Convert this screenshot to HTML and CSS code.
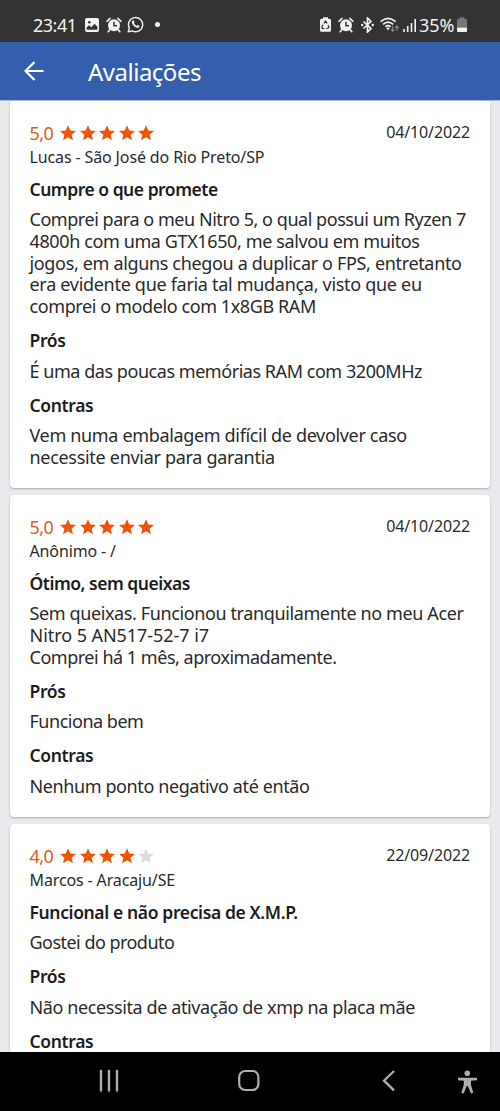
FILE: index.html
```html
<!DOCTYPE html>
<html lang="pt-BR">
<head>
<meta charset="utf-8">
<title>Avaliações</title>
<link rel="stylesheet" href="styles.css">
</head>
<body>
<svg class="defs" width="0" height="0">
  <symbol id="star" viewBox="2 2 20 19"><path d="M12 17.270L18.180 21l-1.640-7.030L22 9.240l-7.190-.61L12 2 9.190 8.630 2 9.240l5.460 4.730L5.820 21z"/></symbol>
  <symbol id="alarm" viewBox="0 0 16 16"><circle cx="8" cy="8.300" r="6" fill="#f2f2f2"/><path d="M1.200 4.200L4 1.500M14.800 4.200L12 1.500M3.800 12.800l-1.600 1.900M12.200 12.800l1.600 1.900" stroke="#f2f2f2" stroke-width="1.700" stroke-linecap="round"/><path d="M8 4.800v4h3" fill="none" stroke="#333" stroke-width="1.500"/></symbol>
</svg>
<div class="screen">
  <header class="status">
    <div class="status-left">
      <span class="clock">23:41</span>
      <svg class="i-photo" viewBox="0 0 14 14"><rect width="14" height="14" rx="2" fill="#f2f2f2"/><circle cx="4.300" cy="4.200" r="1.300" fill="#333"/><path d="M1.600 11.800V9.500l2.500-2.300 2.300 2 3.200-3.500 2.800 3v3.100z" fill="#333"/></svg>
      <svg class="i-alarm"><use href="#alarm"/></svg>
      <svg class="i-whats" viewBox="0 0 17 17"><path d="M1.200 15.900l1.100-4A7.100 7.100 0 1 1 5.100 14.800z" fill="none" stroke="#f2f2f2" stroke-width="1.400" stroke-linejoin="round"/><path d="M5.700 4.600c.5-.4 1-.2 1.200.2l.6 1.400c.1.4-.7 1-.5 1.300.6 1 1.400 1.700 2.500 2.200.4.2.9-.9 1.300-.7l1.500.8c.5.4-.1 1.600-.8 1.900-1 .4-2.400 0-4-1.200-1.400-1.100-2.600-2.800-2.700-4 0-.8.4-1.500.9-1.900z" fill="#f2f2f2"/></svg>
      <i class="dot"></i>
    </div>
    <div class="status-right">
      <svg class="i-saver" viewBox="0 0 11 15"><path d="M3 1.800V.3h5v1.500h1.500Q11 1.800 11 3.300v10Q11 14.800 9.500 14.800h-8Q0 14.800 0 13.300v-10Q0 1.800 1.500 1.800z" fill="#f2f2f2"/><path d="M3.900 6.300l1.600-2.200 1.600 2.200M8 8l1 2.500-1.800 1H6.300M4.500 11.500H2.400l-.6-1.500L3 7.800" fill="none" stroke="#333" stroke-width="1.200"/></svg>
      <svg class="i-alarm"><use href="#alarm"/></svg>
      <svg class="i-bt" viewBox="0 0 13 16"><path d="M2.500 4.500l7.500 7L6.500 15V1L10 4.500l-7.500 7" fill="none" stroke="#f2f2f2" stroke-width="1.700"/><circle cx="1.200" cy="8" r="1.200" fill="#f2f2f2"/><circle cx="11.800" cy="8" r="1.200" fill="#f2f2f2"/></svg>
      <svg class="i-wifi" viewBox="0 0 19 15"><path d="M.7 4.600Q8 -2 15.600 4.600M3.100 7.400Q8 2.700 13.200 7.400M5.500 9.900Q8 7.500 10.600 9.900" fill="none" stroke="#f2f2f2" stroke-width="1.700"/><path d="M8 13.200l-1.700-1.900q1.700-1.500 3.400 0z" fill="#f2f2f2"/><path d="M12.700 9v5M11 12.400l1.700 1.900 1.700-1.900M17 14V9.200M15.300 11L17 9l1.700 2" fill="none" stroke="#858585" stroke-width="1.200"/></svg>
      <svg class="i-signal" viewBox="0 0 14 14"><path d="M1 11v3M4.700 8v6M8.500 5v9M12.200 1v13" stroke="#f2f2f2" stroke-width="1.600"/></svg>
      <span class="percent">35%</span>
      <svg class="i-battery" viewBox="0 0 10 15"><path d="M2.500 2V.3h5V2H9q1 0 1 1v7.500H0V3q0-1 1-1z" fill="#777"/><path d="M0 10.500h10V14q0 1-1 1H1q-1 0-1-1z" fill="#f2f2f2"/></svg>
    </div>
  </header>
  <div class="appbar">
    <svg class="back" viewBox="0 0 20 20"><path d="M19.500 10H1.500M10.500 1l-9 9 9 9" fill="none" stroke="#fff" stroke-width="2.200"/></svg>
    <h1>Avaliações</h1>
  </div>
  <main class="reviews">
    <article class="card">
      <div class="top"><span class="score">5,0</span><span class="stars"><svg><use href="#star"/></svg><svg><use href="#star"/></svg><svg><use href="#star"/></svg><svg><use href="#star"/></svg><svg><use href="#star"/></svg></span><time>04/10/2022</time></div>
      <div class="author">Lucas - São José do Rio Preto/SP</div>
      <h2 class="tight">Cumpre o que promete</h2>
      <p><span class="t45">Comprei para o meu Nitro 5, o qual possui um Ryzen 7</span><br><span class="t38">4800h com uma GTX1650, me salvou em muitos</span><br><span class="t35">jogos, em alguns chegou a duplicar o FPS, entretanto</span><br><span class="t30">era evidente que faria tal mudança, visto que eu</span><br><span class="t40">comprei o modelo com 1x8GB RAM</span></p>
      <h2>Prós</h2>
      <p class="t45">É uma das poucas memórias RAM com 3200MHz</p>
      <h2>Contras</h2>
      <p class="t30"><span class="t35">Vem numa embalagem difícil de devolver caso</span><br>necessite enviar para garantia</p>
    </article>
    <article class="card">
      <div class="top"><span class="score">5,0</span><span class="stars"><svg><use href="#star"/></svg><svg><use href="#star"/></svg><svg><use href="#star"/></svg><svg><use href="#star"/></svg><svg><use href="#star"/></svg></span><time>04/10/2022</time></div>
      <div class="author">Anônimo - /</div>
      <h2 class="tight">Ótimo, sem queixas</h2>
      <p><span class="t38">Sem queixas. Funcionou tranquilamente no meu Acer</span><br><span class="t5">Nitro 5 AN517-52-7 i7</span><br><span class="t48">Comprei há 1 mês, aproximadamente.</span></p>
      <h2>Prós</h2>
      <p class="t48">Funciona bem</p>
      <h2>Contras</h2>
      <p class="t40">Nenhum ponto negativo até então</p>
    </article>
    <article class="card">
      <div class="top"><span class="score">4,0</span><span class="stars"><svg><use href="#star"/></svg><svg><use href="#star"/></svg><svg><use href="#star"/></svg><svg><use href="#star"/></svg><svg class="off"><use href="#star"/></svg></span><time>22/09/2022</time></div>
      <div class="author">Marcos - Aracaju/SE</div>
      <h2>Funcional e não precisa de X.M.P.</h2>
      <p class="t53">Gostei do produto</p>
      <h2>Prós</h2>
      <p class="t40">Não necessita de ativação de xmp na placa mãe</p>
      <h2>Contras</h2>
    </article>
  </main>
  <nav class="navbar">
    <svg viewBox="0 0 500 59"><g fill="none" stroke="#aeaeae"><path d="M101 19v19.500M109 19v19.500M117 19v19.500" stroke-width="2.400" stroke-linecap="round"/><rect x="239.200" y="19" width="19.200" height="19" rx="6" stroke-width="2.200"/><path d="M394 19l-10 9.700 10 9.700" stroke-width="2.300"/></g><g fill="#aeaeae"><circle cx="467.300" cy="21.300" r="2.800"/><path d="M458 25.800h19v2.400l-6 .6v4l2.300 8-2.400.8-3-7.500h-1.200l-3 7.500-2.400-.8 2.500-8v-4l-5.800-.6z"/></g></svg>
  </nav>
</div>
</body>
</html>
```
FILE: styles.css
```css
* { box-sizing: border-box; }
body { margin: 0; font-family: "Noto Sans", sans-serif; color: #2a2a2a; background: #000; }
svg { display: block; flex: none; }
.defs { position: absolute; }
.screen { width: 500px; height: 1111px; display: flex; flex-direction: column; overflow: hidden; }
.status { flex: none; height: 42px; padding: 7px 33px 0; background: #333; color: #f2f2f2; display: flex; justify-content: space-between; align-items: center; }
.status-left, .status-right { display: flex; align-items: center; }
.clock { width: 52px; font-size: 18px; line-height: 24px; letter-spacing: -0.500px; }
.i-photo { width: 14px; height: 14px; }
.i-alarm { width: 16px; height: 16px; margin-left: 7px; }
.i-whats { width: 17px; height: 17px; margin-left: 5px; }
.dot { width: 5px; height: 5px; border-radius: 50%; background: #f2f2f2; margin-left: 11px; }
.i-saver { width: 11px; height: 15px; }
.i-bt { width: 13px; height: 16px; margin-left: 7px; }
.i-wifi { width: 19px; height: 15px; margin-left: 6px; }
.i-signal { width: 14px; height: 14px; margin-left: 4px; }
.percent { width: 38px; margin-left: 2px; font-size: 18px; line-height: 24px; letter-spacing: -0.100px; }
.i-battery { width: 10px; height: 15px; }
.appbar { flex: none; height: 59px; background: #355eae; border-bottom: 1px solid #a9bbdd; display: flex; align-items: center; padding-left: 24px; color: #fff; }
.back { width: 20px; height: 20px; }
h1 { margin: 0 0 0 44px; font-size: 24px; font-weight: 400; line-height: 34px; padding-top: 1px; letter-spacing: -0.500px; }
.reviews { flex: none; height: 951px; background: #e9eaee; padding: 0 10px; overflow: hidden; display: flex; flex-direction: column; gap: 7.200px; }
.card { flex: none; background: #fff; border-radius: 4px; box-shadow: 0 1px 2px rgba(0,0,0,.27); padding: 20px 20px 19.500px 19.500px; }
.top { display: flex; align-items: center; height: 24px; }
.score { width: 30.500px; color: #df5a1b; font-size: 18px; letter-spacing: -0.500px; }
.stars { display: flex; gap: 3.500px; fill: #f05206; }
.stars svg { width: 16px; height: 15.500px; }
.stars .off { fill: #dcdcdc; }
time { margin-left: auto; padding-bottom: 2px; font-size: 16px; letter-spacing: -0.130px; }
.author { height: 22px; margin-top: 1px; font-size: 16px; line-height: 22px; letter-spacing: -0.130px; }
h2 { margin: 11.300px 0 9.400px; color: #1c1c1c; font-size: 17.500px; font-weight: 600; line-height: 22px; letter-spacing: -0.370px; }
.author + h2 { margin-top: 9.700px; }
h2.tight { letter-spacing: -0.480px; }
p { margin: 0; font-size: 18px; line-height: 21.750px; white-space: nowrap; }
.t5 { letter-spacing: -0.050px; }
.t30 { letter-spacing: -0.300px; }
.t35 { letter-spacing: -0.340px; }
.t38 { letter-spacing: -0.385px; }
.t40 { letter-spacing: -0.400px; }
.t45 { letter-spacing: -0.455px; }
.t48 { letter-spacing: -0.480px; }
.t53 { letter-spacing: -0.530px; }
.navbar { height: 59px; background: #000; }
.navbar svg { width: 500px; height: 59px; }
```
